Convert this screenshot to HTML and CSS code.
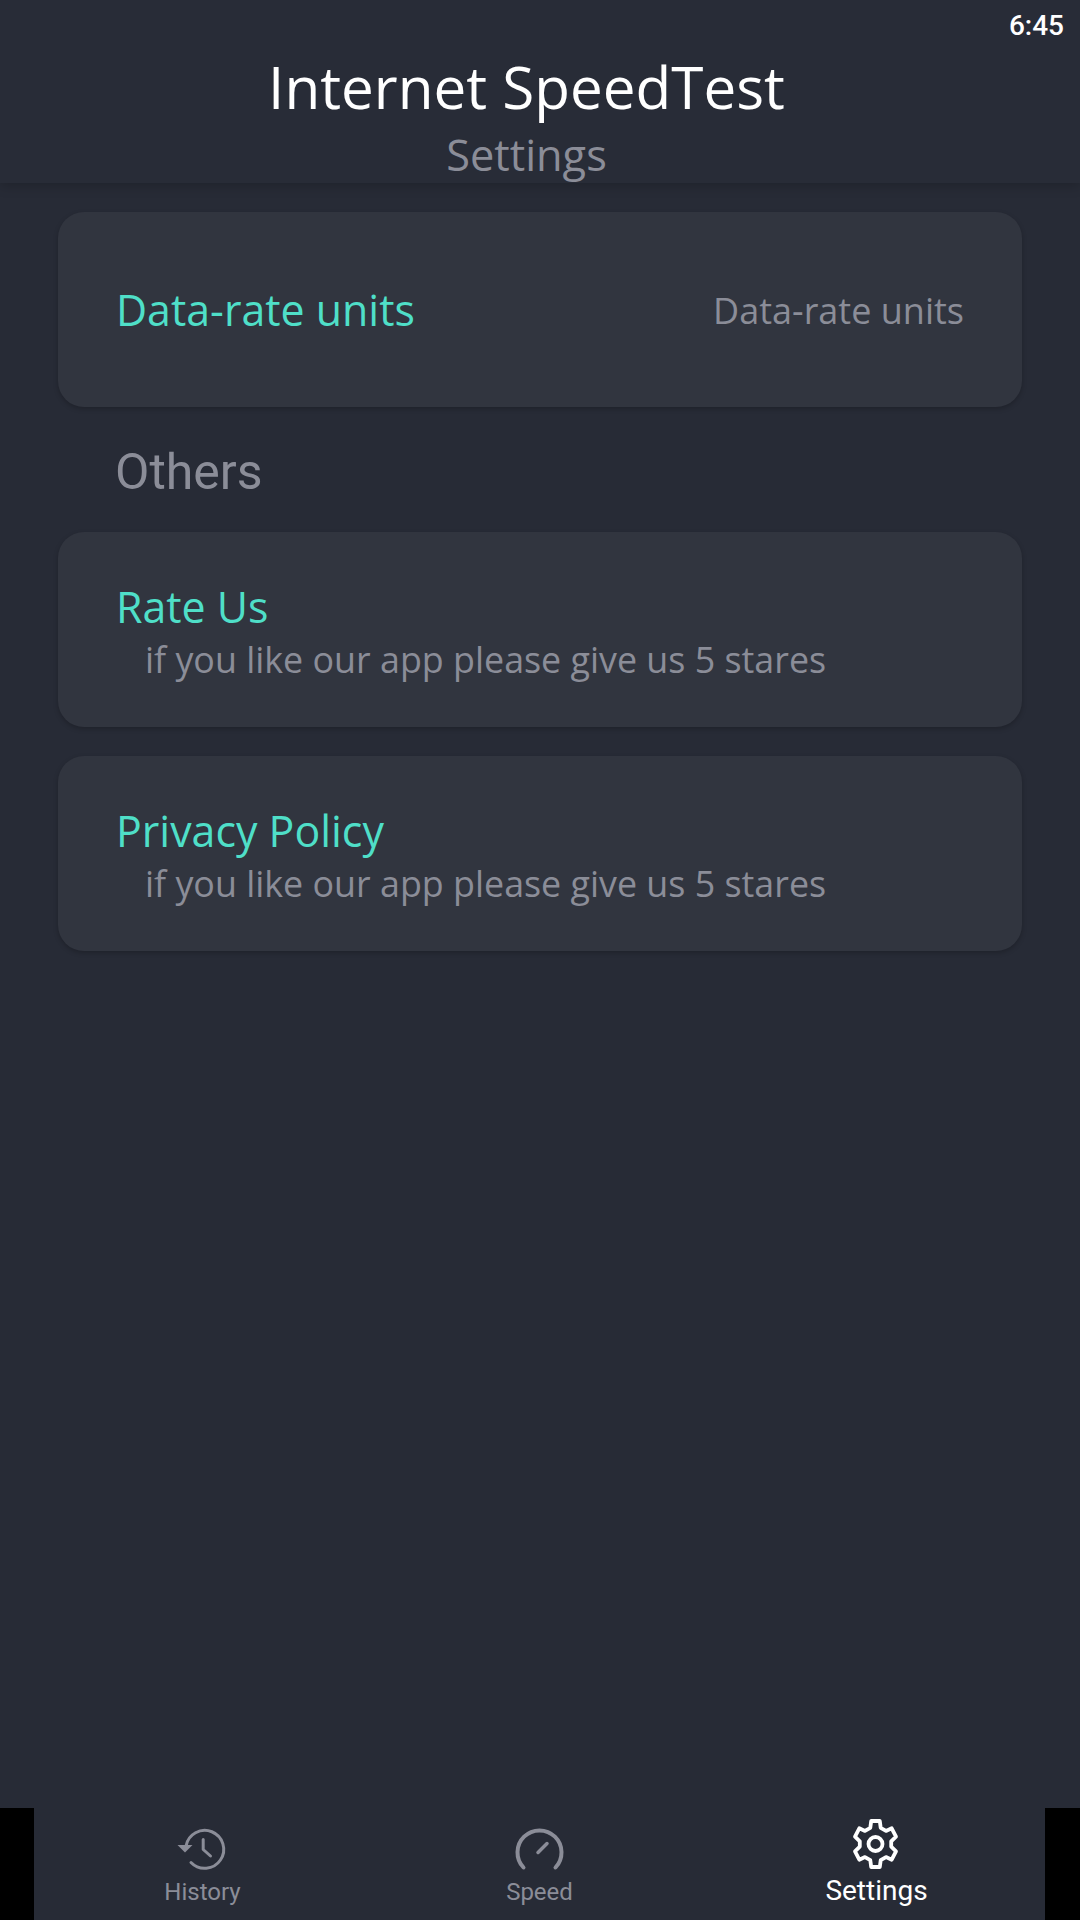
FILE: index.html
```html
<!DOCTYPE html>
<html lang="en">
<head>
<meta charset="utf-8">
<title>Internet SpeedTest</title>
<link rel="stylesheet" href="styles.css">
</head>
<body>
<div class="screen">
  <header class="appbar">
    <div class="status">6:45</div>
    <h1 class="title">Internet SpeedTest</h1>
    <div class="subtitle">Settings</div>
  </header>
  <main class="content">
    <section class="card card-row">
      <span class="card-title">Data-rate units</span>
      <span class="card-value">Data-rate units</span>
    </section>
    <h2 class="section-label">Others</h2>
    <section class="card card-stack">
      <span class="card-title">Rate Us</span>
      <span class="card-sub">if you like our app please give us 5 stares</span>
    </section>
    <section class="card card-stack">
      <span class="card-title">Privacy Policy</span>
      <span class="card-sub">if you like our app please give us 5 stares</span>
    </section>
  </main>
  <div class="tabs-frame">
  <nav class="tabs">
    <div class="tab">
      <svg class="icon" viewBox="0 0 48 48" fill="none" stroke="currentColor" stroke-width="3" stroke-linecap="round" stroke-linejoin="round">
        <path d="M7 21A19 19 0 1 1 12 37.500"/>
        <path d="M-1.500 20H13.500L6 27.500Z" fill="currentColor" stroke="none"/>
        <path d="M24.200 14.500V24.500L31.500 31"/>
      </svg>
      <span class="tab-label">History</span>
    </div>
    <div class="tab">
      <svg class="icon" viewBox="0.500 -0.500 48 48" fill="none" stroke="currentColor" stroke-width="4" stroke-linecap="round" stroke-linejoin="round">
        <path d="M8 42A22 22 0 1 1 40 42"/>
        <path d="M22.500 27L31.500 18" stroke-width="3.500"/>
      </svg>
      <span class="tab-label">Speed</span>
    </div>
    <div class="tab tab-active">
      <svg class="icon icon-gear" viewBox="1.500 0 48 50" fill="none" stroke="currentColor" stroke-width="3.800" stroke-linejoin="round">
        <path d="M19.700 2H28.300L29.200 8.800L34.500 11.900L40.200 9.300L44.500 17.700L39.700 22.400V27.600L44.500 32.300L40.200 40.700L34.500 38.100L29.200 41.200L28.300 48H19.700L18.800 41.200L13.500 38.100L7.800 40.700L3.500 32.300L8.300 27.600V22.400L3.500 17.700L7.800 9.300L13.500 11.900L18.800 8.800Z"/>
        <circle cx="24" cy="25" r="7"/>
      </svg>
      <span class="tab-label">Settings</span>
    </div>
  </nav>
  </div>
</div>
</body>
</html>
```
FILE: styles.css
```css
* { box-sizing: border-box; }
html, body { margin: 0; padding: 0; background: #000; }
.screen {
  width: 1080px;
  height: 1920px;
  display: flex;
  flex-direction: column;
  background: #272b36;
  font-family: "Open Sans", sans-serif;
}
.appbar {
  position: relative;
  height: 183px;
  flex: none;
  display: flex;
  flex-direction: column;
  align-items: center;
  padding: 49px 27px 0 0;
  background: #282c37;
  box-shadow: 0 2px 12px rgba(0, 0, 0, .22);
  z-index: 1;
}
.status {
  position: absolute;
  top: 8px;
  right: 16px;
  font: 500 28px/36px Roboto, sans-serif;
  color: #fff;
}
.title {
  margin: 0;
  font-size: 58.400px;
  font-weight: 400;
  line-height: 76px;
  color: #fff;
}
.subtitle {
  font-size: 43.300px;
  line-height: 50px;
  margin-top: 5px;
  color: #8b8d98;
}
.content {
  flex: 1;
  display: flex;
  flex-direction: column;
  padding: 29px 58px 0;
}
.card {
  height: 195px;
  border-radius: 26px;
  background: #31353f;
  box-shadow: 0 2px 5px rgba(0, 0, 0, .22);
  padding: 0 58px;
}
.card + .card { margin-top: 29px; }
.card-row {
  display: flex;
  align-items: center;
  justify-content: space-between;
}
.card-stack {
  display: flex;
  flex-direction: column;
  padding-top: 47px;
}
.card-title {
  font-size: 42.900px;
  line-height: 56px;
  color: #4fdfc8;
}
.card-value {
  font-size: 36px;
  padding-top: 2px;
  color: #8b8d98;
}
.card-sub {
  font-size: 35.840px;
  line-height: 50px;
  margin-left: 29px;
  color: #8b8d98;
}
.section-label {
  margin: 35px 0 30px 57px;
  font: 400 50px/60px Roboto, sans-serif;
  color: #8b8d98;
}
.tabs-frame {
  flex: none;
  height: 112px;
  padding: 0 35px 0 34px;
  background: #000;
}
.tabs {
  height: 100%;
  display: grid;
  grid-template-columns: repeat(3, 1fr);
  background: #272b36;
}
.tab {
  display: flex;
  flex-direction: column;
  align-items: center;
  padding-top: 17px;
  color: #8b8d98;
  font-family: Roboto, sans-serif;
}
.icon { width: 48px; height: 48px; flex: none; overflow: visible; }
.icon-gear { height: 50px; }
.tab-label { font-size: 24px; line-height: 32px; margin-top: 3px; }
.tab-active { color: #fff; padding-top: 11px; }
.tab-active .tab-label { font-size: 28px; line-height: 36px; margin-top: 4px; }
```
